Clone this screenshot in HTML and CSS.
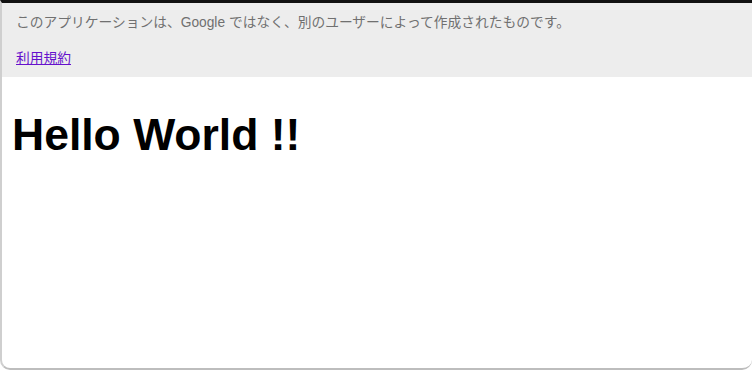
FILE: index.html
```html
<!DOCTYPE html>
<html lang="ja">
<head>
    <meta charset="UTF-8">
    <meta name="viewport" content="width=device-width, initial-scale=1.0">
    <title>Hello World</title>
    <link rel="stylesheet" href="styles.css">
</head>
<body>
    <div class="window">
        <div class="warning-bar">
            <p class="warning-text">このアプリケーションは、Google ではなく、別のユーザーによって作成されたものです。</p>
            <p class="warning-links"><a href="#" class="terms-link">利用規約</a></p>
        </div>
        <div class="content">
            <h1>Hello World !!</h1>
        </div>
    </div>
</body>
</html>
```

FILE: styles.css
```css
html, body {
    margin: 0;
    padding: 0;
    background: #ffffff;
}
body {
    font-family: "Liberation Sans", "Noto Sans CJK JP", sans-serif;
}
.window {
    box-sizing: border-box;
    height: 370px;
    border-top: 3px solid #111111;
    border-left: 2px solid #cfcfcf;
    border-bottom: 2px solid #bdbdbd;
    border-radius: 0 0 10px 10px;
    background: #ffffff;
    overflow: hidden;
}
.warning-bar {
    background: #ededed;
    padding: 10px 14px 8px;
    font-size: 13.75px;
    line-height: 20px;
}
.warning-bar p {
    margin: 0;
}
.warning-text {
    color: #707070;
}
.warning-links {
    margin-top: 16px !important;
}
.terms-link {
    color: #6611cc;
    text-decoration: underline;
}
.content {
    padding: 0 10px;
}
.content h1 {
    margin: 33px 0 0;
    font-size: 44.5px;
    line-height: 50px;
    font-weight: bold;
    color: #000000;
}
```
